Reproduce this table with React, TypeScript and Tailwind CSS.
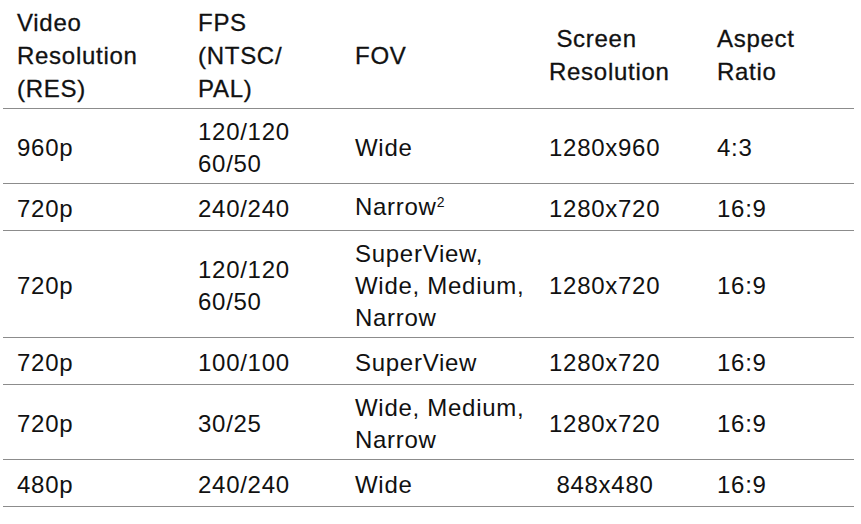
import React from "react";

type Row = {
  height: string;
  cells: React.ReactNode[];
};

const cols = "grid grid-cols-[181px_157px_194px_168px_151px]";

const rows: Row[] = [
  {
    height: "h-[75px]",
    cells: ["960p", <>120/120<br />60/50</>, "Wide", "1280x960", "4:3"],
  },
  {
    height: "h-[47px]",
    cells: [
      "720p",
      "240/240",
      <>Narrow<span className="relative -top-[8px] text-[14px]">2</span></>,
      "1280x720",
      "16:9",
    ],
  },
  {
    height: "h-[107px]",
    cells: [
      "720p",
      <>120/120<br />60/50</>,
      <>SuperView,<br />Wide, Medium,<br />Narrow</>,
      "1280x720",
      "16:9",
    ],
  },
  {
    height: "h-[47px]",
    cells: ["720p", "100/100", "SuperView", "1280x720", "16:9"],
  },
  {
    height: "h-[75px]",
    cells: ["720p", "30/25", <>Wide, Medium,<br />Narrow</>, "1280x720", "16:9"],
  },
  {
    height: "h-[47px]",
    cells: ["480p", "240/240", "Wide", "\u00a0848x480", "16:9"],
  },
];

const App: React.FC = () => {
  return (
    <div className="min-h-screen w-full bg-white font-['Liberation_Sans',Arial,sans-serif] text-[24px] tracking-[0.03em] text-[#111]">
      <div className="ml-[3px] w-[851px]">
        {/* header */}
        <div className={`${cols} h-[109px] border-b border-[#8c8c8c] pt-[2px] leading-[33px] [-webkit-text-stroke:0.3px_#111]`}>
          <div className="flex items-center pl-[14px]">
            <span>Video<br />Resolution<br />(RES)</span>
          </div>
          <div className="flex items-center pl-[14px]">
            <span>FPS<br />(NTSC/<br />PAL)</span>
          </div>
          <div className="flex items-center pl-[14px]">
            <span>FOV</span>
          </div>
          <div className="flex items-center pl-[14px]">
            <span>{"\u00a0"}Screen<br />Resolution</span>
          </div>
          <div className="flex items-center pl-[14px]">
            <span>Aspect<br />Ratio</span>
          </div>
        </div>

        {rows.map((row, i) => (
          <div
            key={i}
            className={`${cols} ${row.height} border-b border-[#8c8c8c] pt-[3px] leading-[32px]`}
          >
            {row.cells.map((cell, j) => (
              <div key={j} className="flex items-center pl-[14px]">
                <span className="whitespace-nowrap">{cell}</span>
              </div>
            ))}
          </div>
        ))}
      </div>
    </div>
  );
};

export default App;
